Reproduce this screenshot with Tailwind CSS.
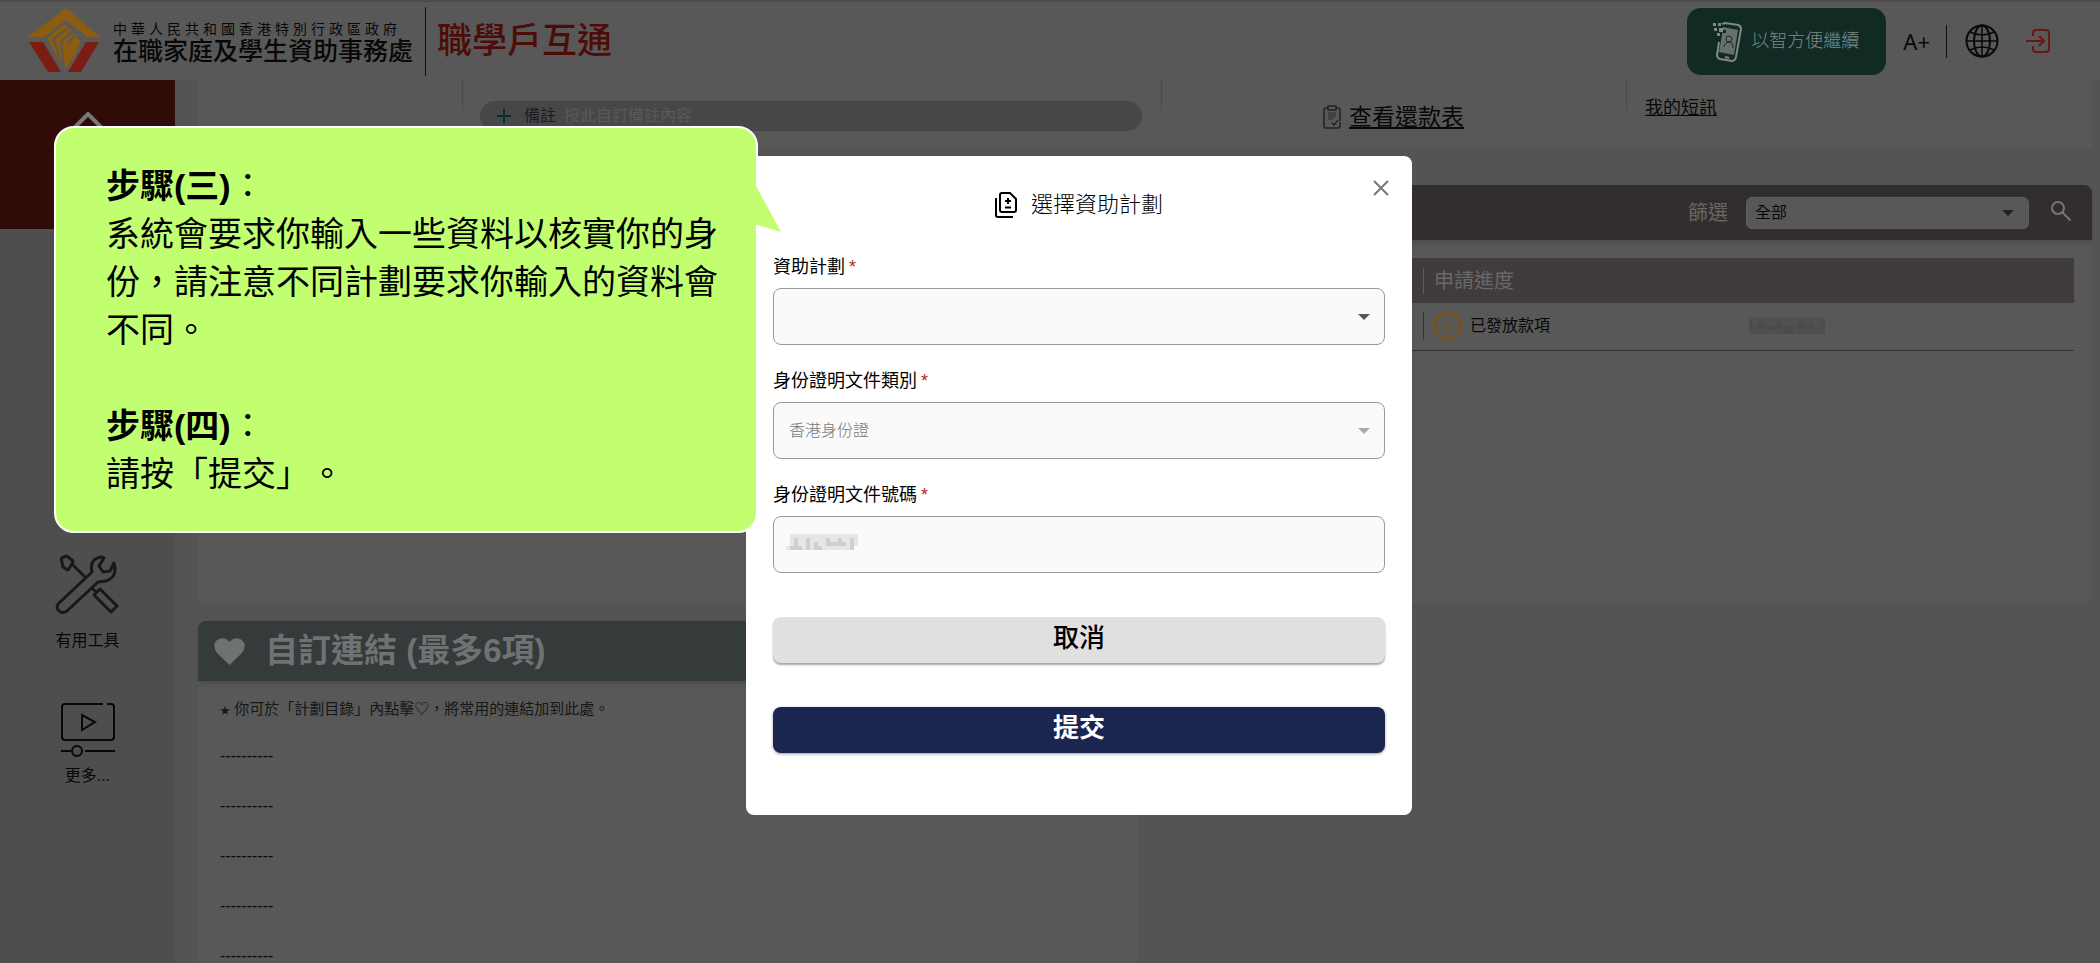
<!DOCTYPE html>
<html lang="zh-Hant-HK">
<head>
  <meta charset="UTF-8">
  <meta name="viewport" content="width=device-width, initial-scale=1.0">
  <title>職學戶互通</title>
  <!-- Tailwind CSS -->
  <script src="https://cdn.jsdelivr.net/npm/@tailwindcss/browser@4"></script>
</head>
<body class="relative flex h-screen flex-col overflow-hidden bg-[#545454] font-['Liberation_Sans','Noto_Sans_CJK_TC',sans-serif] text-base text-[#080808]">

  <!-- Header -->
  <header class="flex h-20 shrink-0 items-center justify-between border-t-2 border-[#4d4b4b] bg-[#585858] pr-[50px] pl-7">
    <div class="flex items-center">
      <svg class="h-[66px] w-[72px]" viewBox="0 0 72 66" aria-hidden="true">
        <path fill="#8c5c10" d="M38 0 72 29H59L38 12 16 29H0Z"/>
        <path fill="#7c1d14" d="M1 34H15L33 64H20ZM71 34H58L40 64H53Z"/>
        <path fill="#8c5c10" d="M19 30 36 16l4 2.500L24 31l10 27ZM27 31 41 20l3 3-12 10 3 25ZM34 34 45 25l2 1-8 8v3l9-9 5 5-7 17-9 11Z"/>
      </svg>
      <div class="ml-[13px] flex flex-col">
        <span class="text-sm leading-5 tracking-[4px]">中華人民共和國香港特別行政區政府</span>
        <span class="text-[25px] leading-6 font-medium">在職家庭及學生資助事務處</span>
      </div>
      <div class="ml-3 h-[69px] w-px bg-[#101010]"></div>
      <h1 class="ml-[11px] text-[35px] leading-10 font-medium text-[#4e0c08]">職學戶互通</h1>
    </div>

    <div class="flex items-center">
      <button class="flex h-[67px] w-[199px] items-center gap-2 rounded-[14px] bg-[#112a24] pl-6 text-lg font-light text-[#7f8a86]">
        <svg class="h-11 w-8" viewBox="0 0 32 44" fill="none" stroke="#7f8a86" stroke-width="2" aria-hidden="true">
          <path d="M14 4l13 2q3 1 3 4l-5 28q-1 4-4 4L9 40q-3-1-3-4l2-13M14 4l-3 1"/>
          <path fill="#66706d" stroke="none" d="m12 8 15 3-4 25-15-3 3-17Z"/>
          <path stroke="#112a24" stroke-width="1" d="M13 28q1-5 5-5t4 6"/><circle cx="18" cy="20" r="3" stroke="#112a24" stroke-width="1"/>
          <path d="m14 38 4 1"/>
          <g fill="#7f8a86" stroke="none"><rect x="2" y="4" width="3" height="3"/><rect x="7" y="4" width="3" height="3"/><rect x="3" y="9" width="3" height="3"/><rect x="8" y="9" width="4" height="4"/><rect x="6" y="14" width="3" height="3"/></g>
          <path fill="#112a24" stroke="none" d="M12 11h3v3h-3z"/>
        </svg>
        以智方便繼續
      </button>
      <button class="ml-[17px] font-['Noto_Sans',sans-serif] text-[22px] leading-8">A+</button>
      <div class="ml-[16px] h-[33px] w-px bg-[#101010]"></div>
      <button class="ml-[18px]" aria-label="語言">
        <svg class="size-[34px]" viewBox="0 0 34 34" fill="none" stroke="#080808" stroke-width="2" aria-hidden="true">
          <circle cx="17" cy="17" r="15.500"/><ellipse cx="17" cy="17" rx="8" ry="15.500"/><path d="M17 1.500V32.500M1.500 17H32.500M5 8q12 6 24 0M5 26q12-6 24 0" stroke-width="1.500"/>
        </svg>
      </button>
      <button class="ml-[27px]" aria-label="登出">
        <svg class="size-6" viewBox="0 0 24 24" fill="none" stroke="#6b1712" stroke-width="2" aria-hidden="true">
          <path d="M7 7V4q0-3 3-3h10q3 0 3 3v16q0 3-3 3H10q-3 0-3-3v-3M0 12h18M13 7l5 5-5 5"/>
        </svg>
      </button>
    </div>
  </header>

  <div class="flex min-h-0 flex-1">
    <!-- Sidebar -->
    <aside class="flex w-[175px] shrink-0 flex-col items-center bg-[#4e4e4e]">
      <a href="#" class="flex h-[149px] w-full justify-center bg-[#310b07] pt-8" aria-label="主頁">
        <svg class="h-12 w-[54px]" viewBox="0 0 54 48" fill="none" stroke="#777" stroke-width="4" aria-hidden="true"><path d="M3 26 27 2l24 24M10 20v25h34V20"/></svg>
      </a>
      <a href="#" class="mt-[325px] flex flex-col items-center">
        <svg class="h-[60px] w-[64px]" viewBox="0 0 64 60" fill="none" stroke="#181818" stroke-width="3" stroke-linejoin="round" aria-hidden="true">
          <path d="M3 50 37 18Q34 5 46 3l3 1-5 8 4 6 7-1 4-8q4 14-8 18l-8 1L12 57q-5 3-8 0t-1-7Z"/>
          <path d="M6 4 12 2l6 5-1 3 13 13M6 4l2 9 5 3 4-6M36 33l6 6M39 41l6-6 17 17-6 6Z"/>
        </svg>
        <span class="mt-[15px] leading-6">有用工具</span>
      </a>
      <a href="#" class="mt-[50px] flex flex-col items-center">
        <svg class="h-[54px] w-[54px]" viewBox="0 0 54 54" fill="none" stroke="#080808" stroke-width="2" aria-hidden="true">
          <path d="M42 1H4Q1 1 1 4v30q0 3 3 3h46q3 0 3-3V4q0-3-3-3h-4M21 12v15l13-8ZM0 48h10M24 48h30"/><circle cx="16" cy="48" r="5"/>
        </svg>
        <span class="mt-[7px] leading-6">更多...</span>
      </a>
    </aside>

    <!-- Main -->
    <main class="flex flex-1 flex-col pr-2 pl-[23px]">
      <!-- Summary strip -->
      <div class="grid h-[69px] shrink-0 grid-cols-[264fr_699fr_465fr_466fr] bg-[#585858]">
        <div></div>
        <div class="relative pt-[21px] pr-[19px] pl-[18px]">
          <div class="absolute top-0 left-0 h-[30px] w-px bg-[#494949]"></div>
          <div class="flex h-[30px] items-center rounded-full bg-[#474747] pl-4">
            <svg class="size-4" viewBox="0 0 16 16" stroke="#06312f" stroke-width="2" aria-hidden="true"><path d="M8 1v14M1 8h14"/></svg>
            <label for="remark" class="ml-3 text-[#1c1c1c]">備註</label>
            <input id="remark" type="text" placeholder="按此自訂備註內容" class="ml-2 flex-1 bg-transparent outline-none placeholder:text-[#595959]">
          </div>
        </div>
        <div class="relative flex justify-center gap-2 pt-[21px]">
          <div class="absolute top-0 left-0 h-[30px] w-px bg-[#494949]"></div>
          <svg class="mt-[4px] h-6 w-[18px]" viewBox="0 0 18 24" fill="none" stroke="#222" stroke-width="1.500" aria-hidden="true">
            <path d="M5 3H3Q1 3 1 5v16q0 2 2 2h12q2 0 2-2v-4M13 3h2q2 0 2 2v11M5 1h8v4H5ZM9 18l2 2 4-5"/><path stroke="#3c3c3c" d="M5 8h8M5 10h8M5 12h8M5 14h5"/>
          </svg>
          <a href="#" class="h-8 text-[23px] leading-8 underline underline-offset-2">查看還款表</a>
        </div>
        <div class="relative pt-4 pl-[19px]">
          <div class="absolute top-0 left-0 h-[30px] w-px bg-[#494949]"></div>
          <a href="#" class="block text-lg leading-6 underline">我的短訊</a>
        </div>
      </div>

      <div class="mt-9 grid min-h-0 flex-1 grid-cols-2 gap-4">
        <div class="flex flex-col">
          <section class="h-[418px] shrink-0 rounded-lg bg-[#585858]"></section>

          <!-- Custom links -->
          <section class="mt-[18px] flex-1 rounded-t-lg bg-[#585858]">
            <h2 class="flex h-[60px] items-center rounded-t-lg bg-[#353a3b] pl-4 text-[33px] font-bold text-[#6e7273] shadow-md">
              <svg class="mr-5 h-[27px] w-[31px]" viewBox="0 0 31 27" fill="#6e7273" aria-hidden="true"><path d="M15.500 27 3 15Q-3 6 4 1.500 11-2 15.500 4 20-2 27 1.500q7 4.500 1 13.500Z"/></svg>
              自訂連結 (最多6項)
            </h2>
            <p class="mt-4 pl-[22px] text-[15px] leading-6 text-[#161616] [text-spacing-trim:space-all]"><span class="text-[10px]">★</span> 你可於「計劃目錄」內點擊♡，將常用的連結加到此處。</p>
            <ul class="mt-2 pl-[22px]">
              <li class="h-[50px] leading-[50px]">----------</li>
              <li class="h-[50px] leading-[50px]">----------</li>
              <li class="h-[50px] leading-[50px]">----------</li>
              <li class="h-[50px] leading-[50px]">----------</li>
              <li class="h-[50px] leading-[50px]">----------</li>
            </ul>
          </section>
        </div>

        <!-- Application status -->
        <section class="h-[418px] rounded-lg bg-[#585858]">
          <div class="flex h-[55px] items-center justify-end rounded-t-lg bg-[#322e2d] pr-5 shadow-md">
            <label for="filter" class="text-[20px] text-[#696665]">篩選</label>
            <div class="relative ml-[18px] h-8 w-[283px]">
              <select id="filter" class="size-full appearance-none rounded-md border border-[#5e5e5e] bg-[#585858] px-2">
                <option>全部</option>
              </select>
              <svg class="pointer-events-none absolute top-[13px] right-[15px] h-[6px] w-3" viewBox="0 0 12 6" fill="#222" aria-hidden="true"><path d="M0 0h12L6 6Z"/></svg>
            </div>
            <button class="ml-[21px] pb-1" aria-label="搜尋">
              <svg class="size-[22px]" viewBox="0 0 22 22" fill="none" stroke="#777" stroke-width="2" aria-hidden="true"><circle cx="8" cy="8" r="6"/><path d="m12.500 12.500 8 8"/></svg>
            </button>
          </div>
          <div class="px-[18px] pt-[18px]">
            <table class="w-full table-fixed text-left">
              <thead>
                <tr class="h-[45px] bg-[#403c3d] text-[20px] text-[#6a6768]">
                  <th class="w-[252px]"></th>
                  <th class="w-[326px] p-0 font-normal"><div class="border-l border-[#5c5a5a] pl-[10px] leading-[26px]">申請進度</div></th>
                  <th></th>
                </tr>
              </thead>
              <tbody>
                <tr class="h-[47px] border-b border-[#333]">
                  <td></td>
                  <td class="p-0">
                    <div class="flex items-center gap-2 border-l border-[#333] pl-[10px]">
                      <svg class="size-7" viewBox="0 0 28 28" fill="none" stroke="#7d5208" stroke-width="2" aria-hidden="true"><circle cx="14" cy="14" r="13"/><path d="M14 12v8M14 8v2"/></svg>
                      已發放款項
                    </div>
                  </td>
                  <td class="p-0">
                    <svg class="h-4 w-[76px]" viewBox="0 0 76 16" aria-hidden="true">
                      <path fill="#505050" d="M0 0h76v16H0Z"/>
                      <path fill="#4b4b4b" d="M0 4h4v8H0ZM8 4h8v8H8ZM20 8h8v4h-8ZM28 4h4v8h-4ZM36 8h8v8h-8ZM48 4h8v8h-8ZM60 4h4v8h-4ZM72 4h4v8h-4Z"/>
                    </svg>
                  </td>
                </tr>
              </tbody>
            </table>
          </div>
        </section>
      </div>
    </main>
  </div>

  <!-- Modal -->
  <div role="dialog" aria-labelledby="modal-title" class="absolute top-[156px] left-[746px] w-[666px] rounded-lg bg-white px-[27px] pt-8 pb-[62px] text-black">
    <button class="absolute top-6 right-[23px]" aria-label="關閉">
      <svg class="size-4" viewBox="0 0 16 16" stroke="#777" stroke-width="2" aria-hidden="true"><path d="m1 1 14 14M15 1 1 15"/></svg>
    </button>
    <h2 id="modal-title" class="flex items-center justify-center gap-[14px] text-[22px] leading-[34px] font-light">
      <svg class="h-[26px] w-[22px]" viewBox="0 0 22 26" fill="none" stroke="#000" stroke-width="2" aria-hidden="true">
        <path d="M7 1h8l6 6v11q0 2-2 2H7q-2 0-2-2V3q0-2 2-2ZM1 6v17q0 2 2 2h15M10 9h6M13 6v6M10 15.500h6"/>
      </svg>
      選擇資助計劃
    </h2>

    <form class="mt-[29px]">
      <label for="scheme" class="block h-[37px] text-lg leading-8">資助計劃<span class="ml-1 text-[#b3261e]">*</span></label>
      <div class="relative h-[57px]">
        <select id="scheme" class="size-full appearance-none rounded-lg border border-[#999] bg-[#fafafa] px-4">
          <option></option>
        </select>
        <svg class="pointer-events-none absolute top-[26px] right-[15px] h-[6px] w-3" viewBox="0 0 12 6" fill="#555" aria-hidden="true"><path d="M0 0h12L6 6Z"/></svg>
      </div>

      <label for="id-type" class="mt-5 block h-[37px] text-lg leading-8">身份證明文件類別<span class="ml-1 text-[#b3261e]">*</span></label>
      <div class="relative h-[57px]">
        <select id="id-type" disabled class="size-full appearance-none rounded-lg border border-[#999] bg-[#fafafa] px-[15px] font-light text-[#777] opacity-100">
          <option>香港身份證</option>
        </select>
        <svg class="pointer-events-none absolute top-[26px] right-[15px] h-[6px] w-3" viewBox="0 0 12 6" fill="#aaa" aria-hidden="true"><path d="M0 0h12L6 6Z"/></svg>
      </div>

      <label for="id-number" class="mt-5 block h-[37px] text-lg leading-8">身份證明文件號碼<span class="ml-1 text-[#b3261e]">*</span></label>
      <div class="relative h-[57px]">
        <input id="id-number" type="text" class="size-full rounded-lg border border-[#999] bg-[#fafafa] px-4">
        <!-- Masked number -->
        <svg class="pointer-events-none absolute top-[18px] left-[13px] h-4 w-[76px]" viewBox="0 0 76 16" aria-hidden="true">
          <path fill="#e6e6e6" d="M4 0h68v12h-4v4H0v-4h4Z"/>
          <path fill="#d0d0d0" d="M8 4h4v8h4v4H4v-4h4ZM20 4h4v12h-4ZM28 8h4v8h-4ZM32 12h4v4h-4ZM40 4h4v8h-4ZM44 8h16v4H44ZM52 4h4v4h-4ZM64 4h4v12h-4Z"/>
        </svg>
      </div>

      <button type="button" class="mt-11 block h-[46px] w-full rounded-lg bg-[#e0e0e0] pb-1 text-[26px] leading-[42px] font-medium shadow-[0_2px_2px_rgba(0,0,0,0.35)]">取消</button>
      <button type="submit" class="mt-11 block h-[46px] w-full rounded-lg bg-[#1a2550] pb-1 text-[26px] leading-[42px] font-bold text-white shadow-[0_1px_3px_rgba(0,0,0,0.4)]">提交</button>
    </form>
  </div>

  <!-- Step bubble -->
  <div class="absolute top-[126px] left-[54px] w-[704px] rounded-[20px] border-2 border-white bg-[#c1ff70] px-[50px] pt-[34px] pb-[33px] text-[34px] leading-[48px] text-black [text-spacing-trim:space-all]">
    <svg class="absolute top-[58px] -right-[25px] h-[46px] w-[27px]" viewBox="0 0 27 46" fill="#c1ff70" aria-hidden="true"><path d="M0 0h2L27 46 0 38Z"/></svg>
    <p class="-mr-5"><b>步驟(三)</b>：<br>系統會要求你輸入一些資料以核實你的身份，請注意不同計劃要求你輸入的資料會不同。</p>
    <p class="mt-12"><b>步驟(四)</b>：<br>請按「提交」。</p>
  </div>

</body>
</html>
